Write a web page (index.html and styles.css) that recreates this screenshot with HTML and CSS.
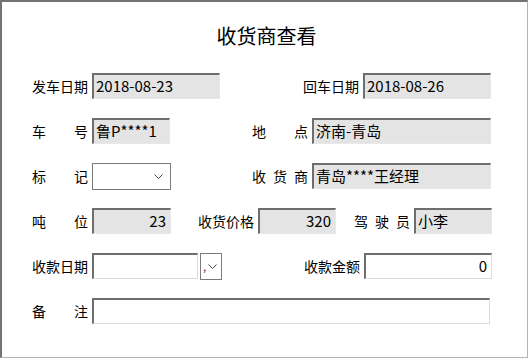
FILE: index.html
```html
<!DOCTYPE html>
<html lang="zh-CN">
<head>
    <meta charset="UTF-8">
    <title>收货商查看</title>
    <link rel="stylesheet" href="styles.css">
</head>
<body>
<div class="frame">
    <h1 class="title">收货商查看</h1>

    <div class="row">
        <span class="lbl">发车日期</span>
        <div class="field w128">2018-08-23</div>
        <span class="lbl ml83">回车日期</span>
        <div class="field w128">2018-08-26</div>
    </div>

    <div class="row">
        <span class="lbl spread">车号</span>
        <div class="field w78">鲁P****1</div>
        <span class="lbl spread ml82">地点</span>
        <div class="field w179">济南-青岛</div>
    </div>

    <div class="row">
        <span class="lbl spread">标记</span>
        <div class="combo w79">
            <svg class="chev" width="9" height="5" viewBox="0 0 9 5"><path d="M0.5 0.5 L4.5 4.5 L8.5 0.5" fill="none" stroke="#444" stroke-width="1"/></svg>
        </div>
        <span class="lbl spread ml81">收货商</span>
        <div class="field w179">青岛****王经理</div>
    </div>

    <div class="row">
        <span class="lbl spread">吨位</span>
        <div class="field w79 num">23</div>
        <span class="lbl ml27">收货价格</span>
        <div class="field w78 num">320</div>
        <span class="lbl spread ml18">驾驶员</span>
        <div class="field w78">小李</div>
    </div>

    <div class="row">
        <span class="lbl">收款日期</span>
        <div class="field blank w106"></div>
        <div class="drop">
            <span class="tick">,</span>
            <svg class="chev" width="9" height="5" viewBox="0 0 9 5"><path d="M0.5 0.5 L4.5 4.5 L8.5 0.5" fill="none" stroke="#444" stroke-width="1"/></svg>
        </div>
        <span class="lbl ml82">收款金额</span>
        <div class="field blank w128 num">0</div>
    </div>

    <div class="row">
        <span class="lbl spread">备注</span>
        <div class="field blank w398"></div>
    </div>
</div>
</body>
</html>
```

FILE: styles.css
```css
body {
    margin: 0;
    padding: 0;
    background-color: #ffffff;
    font-family: "Noto Sans CJK SC", "Microsoft YaHei", sans-serif;
    color: #000;
}

.frame {
    box-sizing: border-box;
    width: 528px;
    height: 358px;
    border-top: 2px solid #737373;
    border-left: 2px solid #737373;
    border-right: 1px solid #b4b4b4;
    border-bottom: 1px solid #b4b4b4;
    background: #fff;
}

.title {
    margin: 0;
    padding-top: 18px;
    height: 31px;
    font-size: 20px;
    font-weight: normal;
    line-height: 31px;
    text-align: center;
    margin-bottom: 22px;
    padding-left: 4px;
}

.row {
    display: flex;
    align-items: center;
    height: 26px;
    margin-bottom: 19px;
    padding-left: 30px;
}

.lbl {
    width: 56px;
    margin-right: 4px;
    font-size: 14px;
    line-height: 26px;
    text-align: right;
    white-space: nowrap;
}

/* labels like 车   号 stretch over the full width */
.spread {
    text-align: justify;
    text-align-last: justify;
}

.field {
    box-sizing: border-box;
    height: 26px;
    background: #e4e4e4;
    border-top: 2px solid #6e6e6e;
    border-left: 2px solid #6e6e6e;
    border-right: 1px solid #e8e8e8;
    border-bottom: 1px solid #e8e8e8;
    font-size: 15px;
    line-height: 22px;
    padding: 0 3px 0 2px;
    white-space: nowrap;
    overflow: hidden;
}

.blank {
    background: #fff;
    border-right-color: #dadada;
    border-bottom-color: #dadada;
}

.num {
    text-align: right;
    padding-right: 4px;
}

.combo {
    box-sizing: border-box;
    height: 27px;
    border: 1px solid #7a7a7a;
    background: #fff;
    display: flex;
    align-items: center;
    justify-content: flex-end;
    padding-right: 7px;
}

.drop {
    box-sizing: border-box;
    width: 22px;
    height: 27px;
    margin-left: 2px;
    border: 1px solid #7a7a7a;
    background: #fff;
    display: flex;
    align-items: center;
    padding-left: 2px;
    gap: 2px;
}

.tick {
    font-size: 11px;
    line-height: 1;
    color: #333;
}

.w78 { width: 78px; }
.w79 { width: 79px; }
.w106 { width: 106px; }
.w128 { width: 128px; }
.w179 { width: 179px; }
.w398 { width: 398px; }

.ml18 { margin-left: 18px; }
.ml27 { margin-left: 27px; }
.ml81 { margin-left: 81px; }
.ml82 { margin-left: 82px; }
.ml83 { margin-left: 83px; }
```
